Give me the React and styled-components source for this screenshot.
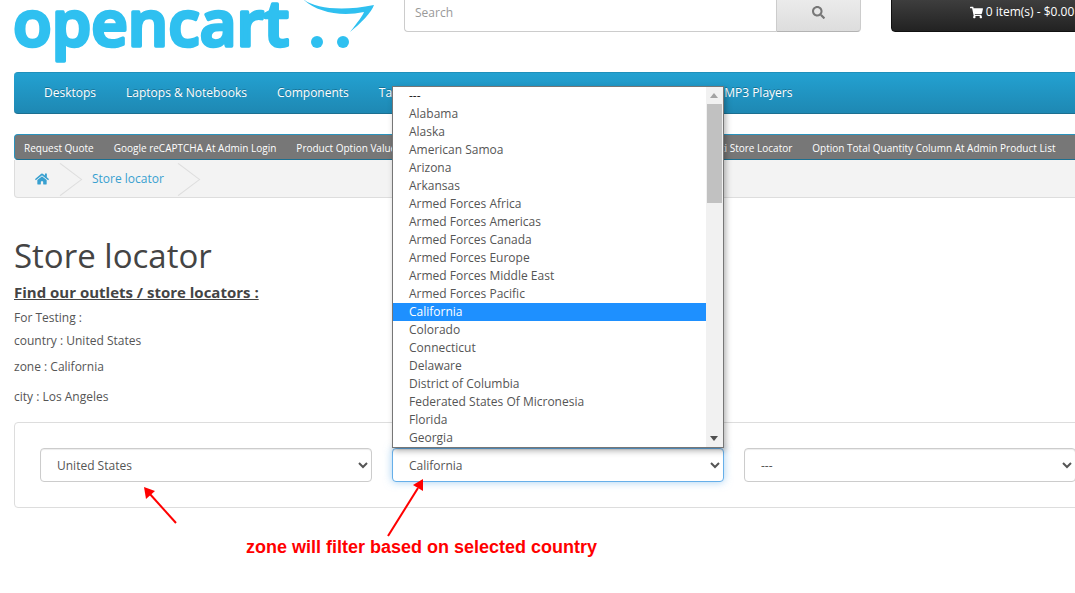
import React from "react";
import styled, { createGlobalStyle } from "styled-components";
import { FaHome, FaSearch, FaShoppingCart } from "react-icons/fa";

const GlobalStyle = createGlobalStyle`
  html, body {
    margin: 0;
    padding: 0;
    height: 593px;
    overflow: hidden;
    background: #fff;
  }
  body {
    font-family: "Open Sans", sans-serif;
    font-size: 12px;
    color: #666;
  }
  * { box-sizing: border-box; }
`;

const Page = styled.div`
  position: relative;
  width: 1200px;
  margin-top: -8px;
  padding-left: 14px;
`;

const Header = styled.header`
  display: flex;
  height: 80px;
`;

const Logo = styled.svg`
  width: 365px;
  height: 72px;
  margin-top: 8px;
  flex: none;
`;

const SearchBox = styled.div`
  display: flex;
  width: 457px;
  height: 40px;
  margin-left: 25px;
`;

const SearchInput = styled.input`
  flex: 1;
  min-width: 0;
  padding: 0 10px;
  font: 12px "Open Sans", sans-serif;
  color: #555;
  background: #fff;
  border: 1px solid #ccc;
  border-right: 0;
  border-radius: 4px 0 0 4px;
  &::placeholder { color: #999; }
`;

const SearchButton = styled.button`
  width: 85px;
  display: flex;
  align-items: center;
  justify-content: center;
  color: #777;
  font-size: 13px;
  background: linear-gradient(#eeeeee, #dddddd);
  border: 1px solid #ccc;
  border-bottom-color: #b3b3b3;
  border-radius: 0 4px 4px 0;
`;

const CartButton = styled.button`
  flex: none;
  width: 262px;
  height: 40px;
  margin-left: 30px;
  display: flex;
  align-items: center;
  justify-content: center;
  gap: 3px;
  padding: 0;
  font: 12px/18px "Open Sans", sans-serif;
  color: #fff;
  background: linear-gradient(#444444, #222222);
  border: 1px solid #111;
  border-radius: 4px;
`;

const MainNav = styled.nav`
  display: flex;
  height: 42px;
  padding-left: 15px;
  margin-bottom: 20px;
  background: linear-gradient(to bottom, #23a1d1, #1e88b3);
  border-bottom: 1px solid #1c6f90;
  border-top: 1px solid #1f90bb;
  border-radius: 4px 0 0 4px;
`;

const MainLink = styled.a`
  padding: 0 15px;
  font-size: 12px;
  line-height: 40px;
  white-space: nowrap;
  color: #fff;
  text-shadow: 0 -1px 0 rgba(0, 0, 0, 0.25);
`;

const SubNav = styled.nav`
  display: flex;
  gap: 20px;
  height: 26px;
  padding-left: 9px;
  background: #777;
  border-top: 1px solid #2a93bd;
  border-bottom: 1px solid #1c6f90;
  border-left: 1px solid #2a93bd;
  border-radius: 4px 0 0 4px;
`;

const SubLink = styled.a`
  font-size: 10px;
  line-height: 26px;
  white-space: nowrap;
  color: #fff;
  ${(p) => p.$width && `min-width: ${p.$width}px;`}
`;

const Breadcrumb = styled.ul`
  display: flex;
  height: 38px;
  margin: 0;
  padding: 0;
  list-style: none;
  overflow: hidden;
  background: #f3f3f3;
  border: 1px solid #ddd;
  border-top: 0;
  border-radius: 0 0 0 4px;
`;

const Crumb = styled.li`
  position: relative;
  padding: 0 ${(p) => p.$pad}px;
  line-height: 36px;
  font-size: 12px;
  color: #38a0d0;
  display: flex;
  align-items: center;
  &::after {
    content: "";
    position: absolute;
    top: 6px;
    right: -5px;
    width: 26px;
    height: 26px;
    border-top: 1px solid #ddd;
    border-right: 1px solid #ddd;
    transform: rotate(45deg) skew(-8deg, -8deg);
  }
`;

const Title = styled.h1`
  margin: 40px 0 0;
  font-size: 33px;
  font-weight: 400;
  line-height: 36px;
  color: #444;
`;

const Heading = styled.h3`
  margin: 8px 0 0;
  font-size: 15px;
  font-weight: 700;
  line-height: 20px;
  color: #444;
  text-decoration: underline;
`;

const Note = styled.p`
  margin: ${(p) => p.$top}px 0 0;
  font-size: 12px;
  line-height: 18px;
  color: #555;
`;

const FilterPanel = styled.div`
  display: grid;
  grid-template-columns: repeat(3, 332px);
  gap: 20px;
  width: 1132px;
  margin-top: 16px;
  padding: 25px;
  border: 1px solid #ddd;
  border-radius: 4px;
`;

const Field = styled.div`
  position: relative;
`;

const Select = styled.select`
  display: block;
  width: 100%;
  height: 34px;
  padding: 6px 12px;
  font: 12px/18px "Open Sans", sans-serif;
  color: #555;
  background: #fff;
  border: 1px solid ${(p) => (p.$focus ? "#66afe9" : "#ccc")};
  border-radius: 4px;
  outline: none;
  box-shadow: ${(p) =>
    p.$focus
      ? "inset 0 1px 1px rgba(0,0,0,.075), 0 0 8px rgba(102,175,233,.6)"
      : "inset 0 1px 1px rgba(0,0,0,.075)"};
`;

const OptionList = styled.div`
  position: absolute;
  left: 0;
  bottom: 100%;
  display: flex;
  width: 332px;
  height: 362px;
  background: #fff;
  border: 1px solid #767676;
  box-shadow: 2px 3px 6px rgba(0, 0, 0, 0.3);
`;

const Options = styled.ul`
  flex: 1;
  margin: 0;
  padding: 0;
  list-style: none;
`;

const OptionRow = styled.li`
  height: 18px;
  padding-left: 16px;
  font-size: 12px;
  line-height: 18px;
  color: ${(p) => (p.$selected ? "#fff" : p.$dark ? "#222" : "#555")};
  background: ${(p) => (p.$selected ? "#1e90ff" : "transparent")};
`;

const Scrollbar = styled.div`
  position: relative;
  flex: none;
  width: 17px;
  background: #f1f1f1;
`;

const ScrollArrow = styled.span`
  position: absolute;
  left: 4px;
  ${(p) => (p.$down ? "bottom: 6px;" : "top: 6px;")}
  width: 0;
  height: 0;
  border-left: 4px solid transparent;
  border-right: 4px solid transparent;
  ${(p) =>
    p.$down
      ? "border-top: 5px solid #505050;"
      : "border-bottom: 5px solid #a3a3a3;"}
`;

const ScrollThumb = styled.div`
  margin: 17px 1px 0;
  height: 99px;
  background: #c1c1c1;
`;

const Annotation = styled.svg`
  position: absolute;
  left: 0;
  top: 8px;
  width: 1075px;
  height: 593px;
  pointer-events: none;
`;

const Callout = styled.div`
  position: absolute;
  left: 246px;
  top: 544px;
  font: 700 18px/22px "Liberation Sans", sans-serif;
  color: #f00;
  white-space: nowrap;
`;

const states = [
  "---", "Alabama", "Alaska", "American Samoa", "Arizona", "Arkansas",
  "Armed Forces Africa", "Armed Forces Americas", "Armed Forces Canada",
  "Armed Forces Europe", "Armed Forces Middle East", "Armed Forces Pacific",
  "California", "Colorado", "Connecticut", "Delaware", "District of Columbia",
  "Federated States Of Micronesia", "Florida", "Georgia",
];

const mainLinks = [
  "Desktops", "Laptops & Notebooks", "Components", "Tablets", "Software",
  "Phones & PDAs", "Cameras", "MP3 Players",
];

// the third one runs on behind the open dropdown, hence its width
const subLinks = [
  { label: "Request Quote" },
  { label: "Google reCAPTCHA At Admin Login" },
  { label: "Product Option Value Image At Cart", width: 387 },
  { label: "Multi Store Locator" },
  { label: "Option Total Quantity Column At Admin Product List" },
];

function OpencartLogo() {
  // viewBox uses page coordinates so the top stays cut off like the screenshot
  return (
    <Logo viewBox="14 0 365 72">
      <text
        x="13"
        y="46"
        textLength="276"
        lengthAdjust="spacingAndGlyphs"
        fontFamily="'Open Sans', sans-serif"
        fontWeight="600"
        fontSize="64"
        fill="#2fc0f0"
        stroke="#2fc0f0"
        strokeWidth="3.5"
        strokeLinejoin="round"
      >
        opencart
      </text>
      <path
        d="M302 -2C312 8 340 12 374 5C372 12 360 24 350 32C358 22 363 15 364 12C340 17 315 12 302 -2Z"
        fill="#2fc0f0"
      />
      <circle cx="317" cy="42" r="6" fill="#2fc0f0" />
      <circle cx="343" cy="42" r="6" fill="#2fc0f0" />
    </Logo>
  );
}

export default function App() {
  return (
    <>
      <GlobalStyle />
      <Page>
        <Header>
          <OpencartLogo />
          <SearchBox>
            <SearchInput placeholder="Search" />
            <SearchButton><FaSearch /></SearchButton>
          </SearchBox>
          <CartButton><FaShoppingCart size={13} /> 0 item(s) - $0.00</CartButton>
        </Header>

        <MainNav>
          {mainLinks.map((l) => <MainLink key={l}>{l}</MainLink>)}
        </MainNav>

        <SubNav>
          {subLinks.map((l) => <SubLink key={l.label} $width={l.width}>{l.label}</SubLink>)}
        </SubNav>

        <Breadcrumb>
          <Crumb $pad={20}><FaHome size={14} /></Crumb>
          <Crumb $pad={23}>Store locator</Crumb>
        </Breadcrumb>

        <Title>Store locator</Title>
        <Heading>Find our outlets / store locators :</Heading>
        <Note $top={7}>For Testing :</Note>
        <Note $top={5}>country : United States</Note>
        <Note $top={8}>zone : California</Note>
        <Note $top={12}>city : Los Angeles</Note>

        <FilterPanel>
          <Field>
            <Select defaultValue="United States">
              <option>United States</option>
            </Select>
          </Field>
          <Field>
            <OptionList>
              <Options>
                {states.map((s) => (
                  <OptionRow key={s} $selected={s === "California"} $dark={s === "---"}>{s}</OptionRow>
                ))}
              </Options>
              <Scrollbar>
                <ScrollArrow />
                <ScrollThumb />
                <ScrollArrow $down />
              </Scrollbar>
            </OptionList>
            <Select $focus defaultValue="California">
              <option>California</option>
            </Select>
          </Field>
          <Field>
            <Select defaultValue="---">
              <option>---</option>
            </Select>
          </Field>
        </FilterPanel>

        <Annotation viewBox="0 0 1075 593">
          <path d="M176 523L149 493" stroke="#f00" strokeWidth="2" fill="none" />
          <path d="M144 487L155 491L146 499Z" fill="#f00" />
          <path d="M388 536L418 488" stroke="#f00" strokeWidth="2" fill="none" />
          <path d="M423 479L423 491L413 485Z" fill="#f00" />
        </Annotation>
        <Callout>zone will filter based on selected country</Callout>
      </Page>
    </>
  );
}
